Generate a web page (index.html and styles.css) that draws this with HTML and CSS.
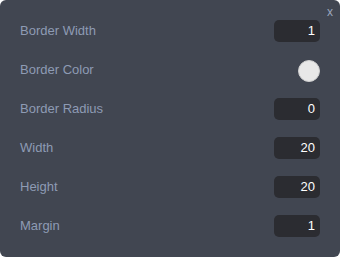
FILE: index.html
```html
<!DOCTYPE html>
<html>
<head>
<meta charset="utf-8">
<link rel="stylesheet" href="styles.css">
</head>
<body>
<div class="panel">
  <span class="close">x</span>
  <div class="row"><span class="label">Border Width</span><span class="num">1</span></div>
  <div class="row"><span class="label">Border Color</span><span class="swatch"></span></div>
  <div class="row"><span class="label">Border Radius</span><span class="num">0</span></div>
  <div class="row"><span class="label">Width</span><span class="num">20</span></div>
  <div class="row"><span class="label">Height</span><span class="num">20</span></div>
  <div class="row"><span class="label">Margin</span><span class="num">1</span></div>
</div>
</body>
</html>
```
FILE: styles.css
```css
html, body {
  margin: 0;
  padding: 0;
  background: #ffffff;
}
.panel {
  position: relative;
  box-sizing: border-box;
  width: 340px;
  height: 257px;
  background: #414651;
  border-radius: 6px;
  padding: 20px 20px 0 20px;
  display: flex;
  flex-direction: column;
  gap: 17px;
  font-family: "Liberation Sans", Arial, sans-serif;
  font-size: 13px;
}
.close {
  position: absolute;
  top: 5px;
  right: 7px;
  color: #9aa6bd;
  font-size: 12px;
}
.row {
  height: 22px;
  display: flex;
  align-items: center;
  justify-content: space-between;
}
.label {
  color: #8e9bb4;
  margin-top: -1px;
}
.num {
  box-sizing: border-box;
  width: 46px;
  height: 22px;
  line-height: 22px;
  background: #2b2c31;
  border-radius: 5px;
  color: #ffffff;
  text-align: right;
  padding-right: 5px;
}
.swatch {
  box-sizing: border-box;
  width: 22px;
  height: 22px;
  border-radius: 50%;
  background: #e8e8e8;
  border: 1px solid #cfcfcf;
  margin-top: 2px;
}
```
